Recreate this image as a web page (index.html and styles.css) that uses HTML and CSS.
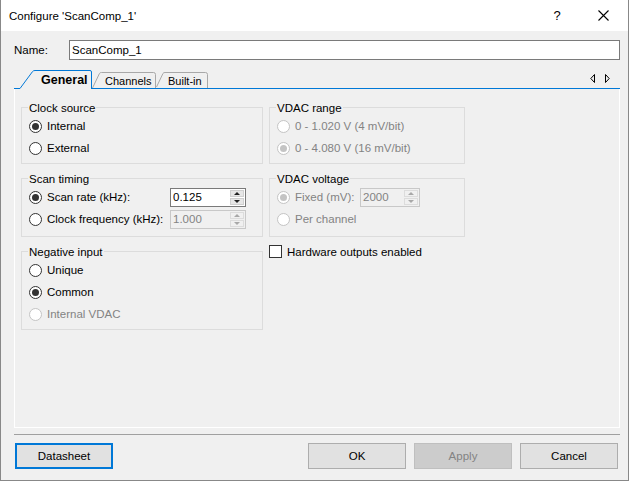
FILE: index.html
```html
<!DOCTYPE html>
<html lang="en">
<head>
    <meta charset="UTF-8">
    <title>Configure 'ScanComp_1'</title>
    <link rel="stylesheet" href="styles.css">
</head>
<body>
    <div class="window">
        <div class="titlebar">
            <span class="title">Configure 'ScanComp_1'</span>
            <span class="caption-btn help">?</span>
            <span class="caption-btn close">
                <svg width="11" height="11" viewBox="0 0 11 11"><path d="M0.5 0.5 L10.5 10.5 M10.5 0.5 L0.5 10.5" stroke="#000" stroke-width="1.1" fill="none"/></svg>
            </span>
        </div>

        <div class="client">
            <div class="name-row">
                <label class="name-label">Name:</label>
                <input class="name-input" type="text" value="ScanComp_1">
            </div>

            <div class="tabstrip">
                <div class="tab tab-general">
                    <svg class="tab-shape" width="78" height="19" viewBox="0 0 78 19">
                        <path d="M0 18.5 H6 L18.5 1.6 Q19.3 0.5 21 0.5 H76 Q77.5 0.5 77.5 2 V19" fill="#f0f0f0" stroke="#0078d7"/>
                    </svg>
                    <span class="tab-text">General</span>
                </div>
                <div class="tab tab-channels">
                    <svg class="tab-shape" width="64" height="19" viewBox="0 0 64 19">
                        <path d="M0.5 18 L7.5 3.4 Q8 2.5 9.5 2.5 H61.5 Q63.5 2.5 63.5 4.5 V18" fill="#f0f0f0" stroke="#a8a8a8"/>
                        <path d="M0 18.5 H64" stroke="#0078d7"/>
                    </svg>
                    <span class="tab-text">Channels</span>
                </div>
                <div class="tab tab-builtin">
                    <svg class="tab-shape" width="52" height="19" viewBox="0 0 52 19">
                        <path d="M0.5 17 L7 3.4 Q7.5 2.5 9 2.5 H49.5 Q51.5 2.5 51.5 4.5 V18" fill="#f0f0f0" stroke="#a8a8a8"/>
                        <path d="M0 18.5 H52" stroke="#0078d7"/>
                    </svg>
                    <span class="tab-text">Built-in</span>
                </div>
                <div class="tab-fill">
                    <svg width="20" height="9" viewBox="0 0 20 9">
                        <path d="M4.5 0.5 L0.8 4.5 L4.5 8.5 Z" fill="none" stroke="#000"/>
                        <path d="M15.5 0.5 L19.2 4.5 L15.5 8.5 Z" fill="none" stroke="#000"/>
                    </svg>
                </div>
            </div>

            <div class="panel">
                <div class="columns">
                    <div class="col">
                        <div class="group">
                            <div class="group-title">Clock source</div>
                            <div class="radio"><span class="dot checked"></span>Internal</div>
                            <div class="radio"><span class="dot"></span>External</div>
                        </div>
                        <div class="group group-spin">
                            <div class="group-title">Scan timing</div>
                            <div class="radio">
                                <span class="dot checked"></span>
                                <span class="spin-label">Scan rate (kHz):</span>
                                <div class="spin">
                                    <span class="spin-value">0.125</span>
                                    <span class="spin-btns"><span class="spin-up"></span><span class="spin-down"></span></span>
                                </div>
                            </div>
                            <div class="radio">
                                <span class="dot"></span>
                                <span class="spin-label">Clock frequency (kHz):</span>
                                <div class="spin disabled">
                                    <span class="spin-value">1.000</span>
                                    <span class="spin-btns"><span class="spin-up"></span><span class="spin-down"></span></span>
                                </div>
                            </div>
                        </div>
                        <div class="group">
                            <div class="group-title">Negative input</div>
                            <div class="radio"><span class="dot"></span>Unique</div>
                            <div class="radio"><span class="dot checked"></span>Common</div>
                            <div class="radio disabled"><span class="dot"></span>Internal VDAC</div>
                        </div>
                    </div>

                    <div class="col">
                        <div class="group">
                            <div class="group-title">VDAC range</div>
                            <div class="radio disabled"><span class="dot"></span>0 - 1.020 V (4 mV/bit)</div>
                            <div class="radio disabled"><span class="dot checked"></span>0 - 4.080 V (16 mV/bit)</div>
                        </div>
                        <div class="group group-spin">
                            <div class="group-title">VDAC voltage</div>
                            <div class="radio disabled">
                                <span class="dot checked"></span>
                                <span class="spin-label short">Fixed (mV):</span>
                                <div class="spin disabled narrow">
                                    <span class="spin-value">2000</span>
                                    <span class="spin-btns"><span class="spin-up"></span><span class="spin-down"></span></span>
                                </div>
                            </div>
                            <div class="radio disabled"><span class="dot"></span>Per channel</div>
                        </div>
                        <div class="check-row"><span class="check"></span>Hardware outputs enabled</div>
                    </div>
                </div>
            </div>

            <div class="separator"></div>

            <div class="buttons">
                <button class="btn btn-focus">Datasheet</button>
                <button class="btn">OK</button>
                <button class="btn" disabled>Apply</button>
                <button class="btn">Cancel</button>
            </div>
        </div>
    </div>
</body>
</html>
```

FILE: styles.css
```css
* {
    box-sizing: border-box;
}

body {
    margin: 0;
    background: #fff;
    font-family: 'Liberation Sans', Arial, sans-serif;
    font-size: 11.5px;
    color: #000;
}

.window {
    width: 629px;
    height: 481px;
    display: flex;
    flex-direction: column;
    background: #f0f0f0;
    border: 1px solid #888;
    border-top: none;
}

.titlebar {
    height: 31px;
    display: flex;
    align-items: center;
    padding-left: 8px;
    background: #fff;
}

.title {
    flex: 1;
}

.caption-btn {
    width: 46px;
    height: 31px;
    display: flex;
    align-items: center;
    justify-content: center;
}

.caption-btn.help {
    font-size: 13px;
    padding-right: 4px;
}

.caption-btn.close {
    padding-right: 3px;
}

.client {
    flex: 1;
    display: flex;
    flex-direction: column;
    padding: 9px 8px 0 13px;
}

.name-row {
    display: flex;
    align-items: center;
    height: 20px;
}

.name-label {
    width: 55px;
}

.name-input {
    flex: 1;
    height: 20px;
    margin: 0;
    padding: 0 2px;
    border: 1px solid #7a7a7a;
    background: #fff;
    font-family: inherit;
    font-size: 11.5px;
    outline: none;
}

/* tabs */
.tabstrip {
    display: flex;
    height: 19px;
    margin-top: 10px;
}

.tab {
    position: relative;
    height: 19px;
    display: flex;
    align-items: center;
    padding-top: 3px;
}

.tab-shape {
    position: absolute;
    left: 0;
    top: 0;
}

.tab-text {
    position: relative;
    font-size: 11px;
}

.tab-general {
    width: 78px;
    padding-left: 27px;
    padding-top: 1px;
}

.tab-general .tab-text {
    font-size: 12.5px;
    font-weight: bold;
}

.tab-channels {
    width: 64px;
    padding-left: 13px;
}

.tab-builtin {
    width: 52px;
    padding-left: 12px;
}

.tab-fill {
    flex: 1;
    display: flex;
    justify-content: flex-end;
    padding: 4px 10px 0 0;
    border-bottom: 1px solid #0078d7;
}

.panel {
    height: 339px;
    padding: 18px 0 0 6px;
    border: 1px solid #fff;
    border-top: none;
}

.columns {
    display: grid;
    grid-template-columns: 242px 196px;
    column-gap: 6px;
    align-items: start;
}

.col {
    display: flex;
    flex-direction: column;
}

.group {
    border: 1px solid #dcdcdc;
    padding: 0 0 4px 7px;
}

.group + .group {
    margin-top: 14px;
}

.group-spin {
    padding-bottom: 6px;
}

.group-title {
    width: max-content;
    margin: -7px 0 0 -1px;
    padding: 0 1px;
    line-height: 14px;
    background: #f0f0f0;
}

.radio {
    height: 22px;
    display: flex;
    align-items: center;
    gap: 5px;
}

.radio.disabled {
    color: #838383;
}

.dot {
    width: 13px;
    height: 13px;
    flex-shrink: 0;
    display: flex;
    align-items: center;
    justify-content: center;
    border: 1px solid #333;
    border-radius: 50%;
    background: #fff;
}

.dot.checked::after {
    content: "";
    width: 7px;
    height: 7px;
    border-radius: 50%;
    background: #333;
}

.disabled .dot {
    border-color: #c4c4c4;
}

.disabled .dot.checked::after {
    background: #c4c4c4;
}

.spin-label {
    width: 123px;
    flex-shrink: 0;
}

.spin-label.short {
    width: 65px;
}

/* spinner box */
.spin {
    width: 76px;
    height: 19px;
    display: flex;
    margin-left: -5px;
    border: 1px solid #7a7a7a;
    background: #fff;
}

.spin.narrow {
    width: 60px;
}

.spin.disabled {
    border-color: #c8c8c8;
    background: #f0f0f0;
    color: #838383;
}

.spin-value {
    flex: 1;
    padding-left: 2px;
    line-height: 17px;
}

.spin-btns {
    width: 15px;
    display: flex;
    flex-direction: column;
    gap: 1px;
    padding: 1px 1px 1px 0;
}

.spin-up,
.spin-down {
    flex: 1;
    display: flex;
    align-items: center;
    justify-content: center;
    background: #e6e6e6;
    border: 1px solid #cfcfcf;
}

.spin-up::after,
.spin-down::after {
    content: "";
    border-left: 3px solid transparent;
    border-right: 3px solid transparent;
}

.spin-up::after {
    border-bottom: 3px solid #222;
}

.spin-down::after {
    border-top: 3px solid #222;
}

.spin.disabled .spin-up,
.spin.disabled .spin-down {
    background: #f0f0f0;
    border-color: #dcdcdc;
}

.spin.disabled .spin-up::after {
    border-bottom-color: #a8a8a8;
}

.spin.disabled .spin-down::after {
    border-top-color: #a8a8a8;
}

.check-row {
    height: 15px;
    margin-top: 7px;
    display: flex;
    align-items: center;
    gap: 5px;
}

.check {
    width: 13px;
    height: 13px;
    border: 1px solid #333;
    background: #fff;
}

.separator {
    height: 1px;
    margin-top: 6px;
    background: #a0a0a0;
}

.buttons {
    display: flex;
    gap: 8px;
    margin-top: 8px;
    padding: 0 2px 0 1px;
}

.btn {
    width: 98px;
    height: 26px;
    margin: 0;
    border: 1px solid #adadad;
    background: #e1e1e1;
    font-family: inherit;
    font-size: 11.5px;
    color: #000;
}

.btn-focus {
    margin-right: auto;
    border: 2px solid #0078d7;
}

.btn:disabled {
    background: #cccccc;
    border-color: #bfbfbf;
    color: #838383;
}
```
